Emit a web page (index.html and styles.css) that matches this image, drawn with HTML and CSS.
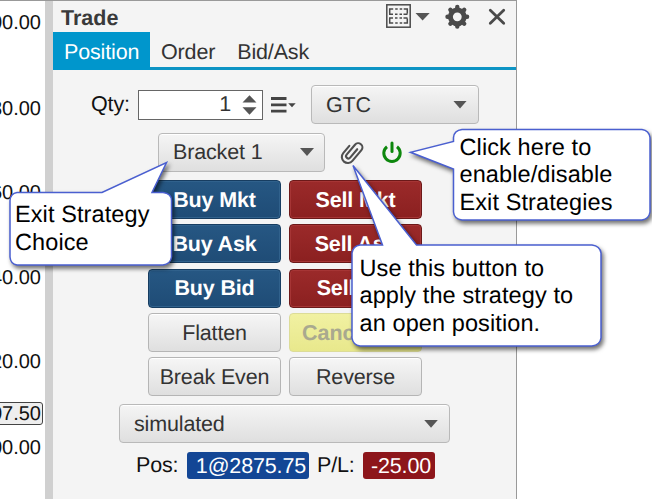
FILE: index.html
```html
<!DOCTYPE html>
<html lang="en">
<head>
<meta charset="utf-8">
<title>Trade</title>
<link rel="stylesheet" href="styles.css">
</head>
<body>
<div class="app">
  <div class="axis">
    <span>00.00</span><span>80.00</span><span>60.00</span><span>40.00</span><span>20.00</span><span class="last"><b>07.50</b></span><span>00.00</span>
  </div>
  <div class="divider"></div>
  <main class="panel">
    <header class="head">
      <h1>Trade</h1>
      <svg class="tools" width="122" height="28" viewBox="386 3 122 28">
        <g fill="none" stroke="#4a4a4a">
          <rect x="386.8" y="4.8" width="23.4" height="22.4" stroke-width="1.5"/>
          <path stroke-width="1.500" d="M389.700 13.600V9h3.500m2 0h2.500m2 0h2.500m1.500 0h3.600v4.600M389 14.200h4m2 0h2.500m2 0h2.500m1.500 0h4M389.700 18.400V23h3.500m2 0h2.500m2 0h2.500m1.500 0h3.600v-4.600M389 18h4m2 0h2.500m2 0h2.500m1.500 0h4"/>
          <circle cx="457.300" cy="16.800" r="6.900" stroke-width="5"/>
          <path stroke-width="4.400" stroke-linecap="round" d="M457.300 7v1M457.300 25.600v1M447.500 16.800h1M466.100 16.800h1M450.400 9.900l.7.7M463.500 23l.7.7M450.400 23.700l.7-.7M463.500 10.600l.7-.7"/>
          <path stroke-width="2.800" stroke-linecap="round" d="M490.300 10.300l13.400 13M503.700 10.300l-13.400 13"/>
        </g>
        <path fill="#555" d="M415.500 13h14.200l-7.100 7.500z"/>
      </svg>
    </header>
    <nav class="tabs"><a class="on">Position</a><a>Order</a><a>Bid/Ask</a></nav>
    <section class="qty">
      <label>Qty:</label>
      <div class="field"><span>1</span><svg width="15" height="20" viewBox="0 0 15 20"><path fill="#555" d="M.5 7.500L7.500.3l7 7.200zM.5 12.300h14l-7 7.400z"/></svg></div>
      <svg class="menu" width="25" height="16" viewBox="0 0 25 16"><path fill="#444" d="M0 0h15.500v3H0zM0 6.400h15.500v2.800H0zM0 12.700h15.500v2.800H0z"/><path fill="#444" d="M17.200 6.300h7.500L21 10.300z"/></svg>
      <div class="select tif"><span>GTC</span><i></i></div>
    </section>
    <section class="strategy">
      <div class="select bracket"><span>Bracket 1</span><i></i></div>
      <svg class="clip" width="24" height="26" viewBox="340 139 24 26"><path transform="rotate(40 352 152)" fill="none" stroke="#505050" stroke-width="2.100" stroke-linecap="round" d="M354.200 146.500v11a2.300 2.300 0 0 1-4.600 0V144.500a4.200 4.200 0 0 1 8.400 0v14a6 6 0 0 1-12 0V149"/></svg>
      <svg class="power" width="22" height="24" viewBox="381 140 22 24"><g fill="none" stroke="#0d870d" stroke-width="3"><path d="M387 146.700a8.200 8.200 0 1 0 10 0"/><path stroke-linecap="round" d="M392 142.900v8.600"/></g></svg>
    </section>
    <section class="actions">
      <div class="btn buy">Buy Mkt</div><div class="btn sell">Sell Mkt</div>
      <div class="btn buy">Buy Ask</div><div class="btn sell">Sell Ask</div>
      <div class="btn buy">Buy Bid</div><div class="btn sell">Sell Bid</div>
      <div class="btn">Flatten</div><div class="btn cancel">Cancel All</div>
      <div class="btn">Break Even</div><div class="btn">Reverse</div>
    </section>
    <div class="select account"><span>simulated</span><i></i></div>
    <footer class="status"><span>Pos:</span><span class="chip pos">1@2875.75</span><span>P/L:</span><span class="chip loss">-25.00</span></footer>
  </main>
  <svg class="bubbles" width="652" height="499" viewBox="0 0 652 499">
    <path d="M17 192.500H102L166.500 162.500 152 192.500H163q8.500 1 8.500 8V257q-1 7-8.500 8H17q-6.500-1-7-8V200.500q.5-7 7-8z"/>
    <path d="M462 129.500H642q7 1 8 8V212q-1 7-8 8H462q-8-1-8.500-8V169L410.500 152.300 453.500 141.500V137.500q.5-7 8.500-8z"/>
    <path d="M360 245H382.500L353 165.500 416.500 245H592q8 1 9 8V338q-1 7-9 8H360q-7-1-8-8V253q1-7 8-8z"/>
  </svg>
  <p class="note exit">Exit Strategy<br>Choice</p>
  <p class="note toggle">Click here to<br>enable/disable<br>Exit Strategies</p>
  <p class="note apply">Use this button to<br>apply the strategy to<br>an open position.</p>
</div>
</body>
</html>
```
FILE: styles.css
```css
* { box-sizing: border-box; }
body { margin: 0; background: #fff; font-family: "Liberation Sans", Arial, sans-serif; color: #333; text-rendering: geometricPrecision; }
.app { position: relative; display: flex; width: 652px; height: 499px; overflow: hidden; font-size: 21.500px; letter-spacing: -.15px; }
.axis { width: 45px; display: grid; grid-template-columns: 41px; grid-template-rows: 86px 84px 85px 84px 53px 33px 20px; align-content: start; justify-items: end; padding: 12px 4px 0 0; overflow: hidden; border-top: 1px solid #999; font-size: 20px; line-height: 20px; color: #111; letter-spacing: 0; }
.axis .last { margin: -3px -2px 0 0; height: 23px; padding: 1px 1px 0 8px; border: 1.500px solid #444; border-radius: 3px; background: #eee; }
.axis b { font-weight: normal; }
.divider { width: 8px; background: #d0d0d0; border-top: 1px solid #999; }
.panel { width: 464px; background: #f4f4f4; border-right: 1px solid #999; border-top: 1px solid #999; display: flex; flex-direction: column; }
.head { height: 31px; display: flex; justify-content: space-between; padding: 2px 8px 0 8px; }
h1 { margin: 0; font-size: 21.500px; line-height: 30px; color: #3a3a3a; letter-spacing: 0; }
.tabs { height: 38px; display: flex; border-bottom: 3px solid #0d94c4; line-height: 40px; }
.tabs a { padding: 0 11px; height: 35px; }
.tabs .on { width: 97px; height: 38px; background: #0096cc; color: #fff; }
.qty { height: 39px; margin: 15px 0 0 37px; display: flex; align-items: center; color: #111; }
.qty label { width: 47px; margin-left: 1px; }
.field { width: 125px; height: 30px; background: #fff; border: 1.500px solid #666; display: flex; align-items: center; justify-content: flex-end; gap: 11px; padding-right: 5px; color: #333; }
.menu { margin: 0 15px 0 8px; }
.select { height: 39px; display: flex; align-items: center; justify-content: space-between; padding: 0 11px 0 14px; border: 1px solid #b9b9b9; border-radius: 4px; background: linear-gradient(#f5f5f5, #dfdfdf); box-shadow: inset 0 1px #fff; color: #333; }
.select span { padding-top: 1px; }
.select i { width: 14px; height: 8px; background: #555; clip-path: polygon(0 0, 100% 0, 50% 100%); }
.tif { width: 168px; }
.strategy { height: 39px; display: flex; align-items: center; margin: 8.500px 0 0 105px; }
.bracket { width: 167px; padding-right: 10px; }
.clip { margin-left: 15px; }
.power { margin-left: 17px; }
.actions { display: grid; grid-template-columns: 133px 133px; grid-auto-rows: 39px; column-gap: 8px; row-gap: 5.300px; margin: 8.500px 0 0 95px; }
.btn { display: flex; align-items: center; justify-content: center; padding-top: 1.500px; border: 1px solid #b5b5b5; border-radius: 4px; background: linear-gradient(#f6f6f6, #dfdfdf); box-shadow: inset 0 1px #fff; white-space: nowrap; }
.buy, .sell { color: #fff; font-weight: bold; }
.buy { border-color: #173d61; background: linear-gradient(#265783, #1f4c76); box-shadow: inset 0 0 0 1px #30618c; }
.sell { border-color: #6c1919; background: linear-gradient(#9b2a2a, #8b2020); box-shadow: inset 0 0 0 1px #a63535; }
.cancel { color: #a9a98f; font-weight: bold; letter-spacing: 0; padding-right: 4px; border-color: #dcdc98; background: linear-gradient(#f1f1a2, #e8e88c); box-shadow: none; }
.account { width: 331px; margin: 8px 0 0 66px; }
.status { display: flex; align-items: center; height: 27px; margin: 8.500px 0 0 83px; color: #111; }
.status span:not(.chip) { width: 43px; padding-top: 1px; }
.chip { height: 27px; line-height: 28px; border-radius: 3px; color: #fff; text-align: right; }
.pos { width: 122px; margin: 0 8px; padding-right: 3px; background: #134695; }
.loss { width: 72px; margin-left: 3px; padding-right: 4px; background: #8d161b; }
.bubbles { position: absolute; left: 0; top: 0; fill: #fff; stroke: #4a5fd0; stroke-width: 1.500; filter: drop-shadow(2px 3px 2px rgba(0, 0, 0, .55)); }
.note { position: absolute; margin: 0; font-size: 23.500px; line-height: 27.500px; color: #000; white-space: nowrap; letter-spacing: .1px; }
.exit { left: 15px; top: 201px; }
.toggle { left: 459.500px; top: 133.500px; }
.apply { left: 359.500px; top: 254.500px; }
```
